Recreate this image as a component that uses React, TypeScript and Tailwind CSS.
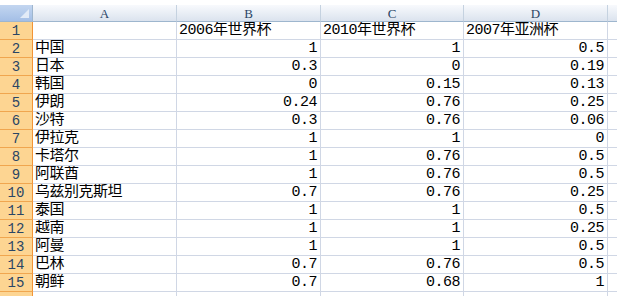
const COLS = ["A", "B", "C", "D"];

const ROWS: [string, string, string, string][] = [
  ["", "2006年世界杯", "2010年世界杯", "2007年亚洲杯"],
  ["中国", "1", "1", "0.5"],
  ["日本", "0.3", "0", "0.19"],
  ["韩国", "0", "0.15", "0.13"],
  ["伊朗", "0.24", "0.76", "0.25"],
  ["沙特", "0.3", "0.76", "0.06"],
  ["伊拉克", "1", "1", "0"],
  ["卡塔尔", "1", "0.76", "0.5"],
  ["阿联酋", "1", "0.76", "0.5"],
  ["乌兹别克斯坦", "0.7", "0.76", "0.25"],
  ["泰国", "1", "1", "0.5"],
  ["越南", "1", "1", "0.25"],
  ["阿曼", "1", "1", "0.5"],
  ["巴林", "0.7", "0.76", "0.5"],
  ["朝鲜", "0.7", "0.68", "1"],
  ["", "", "", ""],
];

const grid = "grid grid-cols-[33px_144px_144px_143px_144px_1fr]";
const cellFont =
  "font-['Liberation_Mono','Noto_Sans_CJK_SC',monospace] text-[15px] tracking-[-0.5px] text-black";

export default function App() {
  return (
    <div className="h-[296px] w-[617px] overflow-hidden bg-white pt-[5px]">
      {/* column headers */}
      <div className={`${grid} h-[17px]`}>
        <div className="relative border-r border-b border-r-[#9eb6ce] border-b-[#9eb6ce] bg-gradient-to-b from-[#c3d6f0] to-[#a4bfe6]">
          <div className="absolute right-[3px] bottom-[3px] h-0 w-0 border-t-[9px] border-r-[9px] border-t-transparent border-r-[#e2ebf7]" />
        </div>
        {COLS.map((c) => (
          <div
            key={c}
            className="flex items-center justify-center border-r border-b border-r-[#c5d2e0] border-b-[#9eb6ce] bg-gradient-to-b from-[#f8fafd] to-[#dbe3ee] font-['Liberation_Serif',serif] text-[13px] leading-none text-[#2a4565]"
          >
            {c}
          </div>
        ))}
        <div className="border-b border-b-[#9eb6ce] bg-gradient-to-b from-[#f8fafd] to-[#dbe3ee]" />
      </div>

      {/* rows */}
      {ROWS.map((row, i) => (
        <div key={i} className={`${grid} h-[18px]`}>
          <div className="flex items-center justify-center border-r border-b border-r-[#f29436] border-b-[#f0a64f] bg-[#fdd592] font-['Liberation_Mono',monospace] text-[14px] leading-none text-[#2a4565]">
            {i < 15 ? i + 1 : ""}
          </div>
          {row.map((v, j) => (
            <div
              key={j}
              className={`flex items-center overflow-hidden whitespace-nowrap border-r border-b border-[#d0d7e5] leading-none ${cellFont} ${
                j === 0 || i === 0 ? "justify-start pl-[2px]" : "justify-end pr-[3px]"
              }`}
            >
              {v}
            </div>
          ))}
          <div className="border-b border-[#d0d7e5]" />
        </div>
      ))}
    </div>
  );
}
